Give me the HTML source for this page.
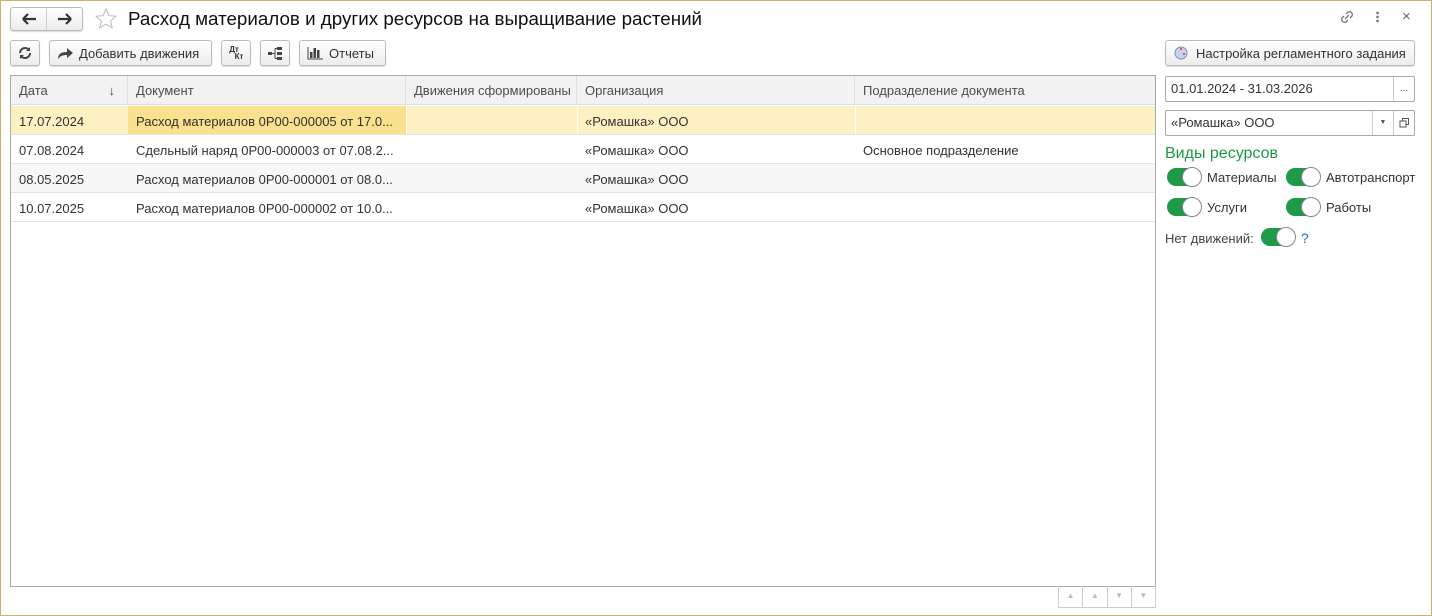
<!DOCTYPE html>
<html><head><meta charset="utf-8"><style>
*{box-sizing:border-box;margin:0;padding:0}
body{width:1432px;height:616px;overflow:hidden;background:#fff;font-family:"Liberation Sans",sans-serif;font-size:13px;color:#333;position:relative}
.frame{position:absolute;left:0;top:0;width:1432px;height:616px;border:1px solid #c9b56a}
.abs{position:absolute}
.btn{position:absolute;height:26px;border:1px solid #bbb;border-radius:3px;background:linear-gradient(#fff,#ececec);box-shadow:0 1px 1px rgba(0,0,0,.15);display:flex;align-items:center;font-size:13px;color:#333}
.tbl{position:absolute;left:10px;top:75px;width:1146px;height:512px;border:1px solid #aaa;background:#fff}
.hdr{position:absolute;top:0;height:29px;background:#f2f2f2;border-bottom:1px solid #ddd;border-right:1px solid #ddd;line-height:29px;padding-left:8px;color:#4d4d4d}
.row{position:absolute;left:0;width:1144px;height:29px;border-bottom:1px solid #e4e4e4;line-height:31px}
.row span{position:absolute;top:0}
.tog{position:absolute;width:34px;height:20px}
.tog .t{position:absolute;left:0;top:1px;width:34px;height:18px;border-radius:9px;background:#1e9a48}
.tog .k{position:absolute;right:-1px;top:0;width:20px;height:20px;border-radius:50%;background:#fff;border:1px solid #888}
.inp{position:absolute;border:1px solid #aaa;border-radius:2px;height:26px;background:#fff;line-height:24px;padding-left:5px;font-size:13px;color:#333}
</style></head><body>
<div class="frame"></div>
<div class="btn" style="left:10px;top:7px;width:73px;height:24px;padding:0">
<svg width="36" height="22" style="border-right:1px solid #ccc"><path d="M12 11h13M12 11l5-5M12 11l5 5" stroke="#333" stroke-width="2.2" fill="none"/></svg>
<svg width="36" height="22"><path d="M24 11H11M24 11l-5-5M24 11l-5 5" stroke="#333" stroke-width="2.2" fill="none"/></svg>
</div>
<svg class="abs" style="left:94px;top:7px" width="24" height="24"><path d="M12 2l2.9 6.6 7.1.6-5.4 4.7 1.6 7-6.2-3.7-6.2 3.7 1.6-7L2 9.2l7.1-.6z" fill="none" stroke="#bbb" stroke-width="1"/></svg>
<div class="abs" style="left:128px;top:8px;font-size:18.8px;color:#111;line-height:22px">Расход материалов и других ресурсов на выращивание растений</div>
<svg class="abs" style="left:1338px;top:8px" width="18" height="18"><path d="M8 6l2-2a3 3 0 014 4l-2 2M10 12l-2 2a3 3 0 01-4-4l2-2M7 11l4-4" stroke="#777" stroke-width="1.3" fill="none"/></svg>
<div class="abs" style="left:1376px;top:11px;width:3px;height:12px;background:radial-gradient(circle,#777 1.2px,transparent 1.5px) 0 0/3px 4px"></div>
<div class="abs" style="left:1402px;top:8px;font-size:15px;color:#666">×</div>
<div class="btn" style="left:10px;top:40px;width:30px;justify-content:center"><svg width="16" height="16"><path d="M3 8a5 5 0 019-3M13 8a5 5 0 01-9 3" stroke="#444" stroke-width="2" fill="none"/><path d="M13 2v4H9zM3 14v-4h4z" fill="#444"/></svg></div>
<div class="btn" style="left:49px;top:40px;width:163px;padding-left:7px"><svg width="18" height="14"><path d="M1 13c0-5 3-7 9-7V2l6 5-6 5V9c-4 0-7 1-9 4z" fill="#444"/></svg><span style="margin-left:4px">Добавить движения</span></div>
<div class="btn" style="left:221px;top:40px;width:30px;justify-content:center;font-size:8px;font-weight:bold;line-height:7px;flex-direction:column"><span style="margin-left:-4px">Дт</span><span style="margin-left:6px">Кт</span></div>
<div class="btn" style="left:260px;top:40px;width:30px;justify-content:center"><svg width="16" height="14"><rect x="1" y="6" width="4" height="3" fill="#444"/><rect x="10" y="1" width="5" height="3" fill="#444"/><rect x="10" y="6" width="5" height="3" fill="#444"/><rect x="10" y="11" width="5" height="3" fill="#444"/><path d="M5 7.5h3M8 2.5v10M8 2.5h2M8 12.5h2" stroke="#444"/></svg></div>
<div class="btn" style="left:299px;top:40px;width:87px;padding-left:7px"><svg width="16" height="14"><path d="M1 1v12h15" stroke="#444" fill="none"/><rect x="3" y="6" width="2.5" height="6" fill="#444"/><rect x="6.5" y="2" width="2.5" height="10" fill="#444"/><rect x="10" y="4" width="2.5" height="8" fill="#444"/></svg><span style="margin-left:6px">Отчеты</span></div>
<div class="btn" style="left:1165px;top:40px;width:250px;padding-left:8px"><svg width="14" height="14"><circle cx="7" cy="7" r="6" fill="#c9d2e8" stroke="#8090b0"/><circle cx="7" cy="3" r="1" fill="#d33"/><circle cx="10" cy="8" r="1" fill="#d33"/></svg><span style="margin-left:8px">Настройка регламентного задания</span></div>
<div class="tbl">
<div class="hdr" style="left:0;width:117px">Дата<span style="position:absolute;right:12px">↓</span></div>
<div class="hdr" style="left:117px;width:278px">Документ</div>
<div class="hdr" style="left:395px;width:171px">Движения сформированы</div>
<div class="hdr" style="left:566px;width:278px">Организация</div>
<div class="hdr" style="left:844px;width:300px;border-right:0">Подразделение документа</div>
<div class="row" style="top:30px;background:#fdf1c3"><div style="position:absolute;left:117px;top:0;width:278px;height:28px;background:#fbe18e"></div><span style="left:8px">17.07.2024</span><span style="left:125px">Расход материалов 0Р00-000005 от 17.0...</span><span style="left:574px">«Ромашка» ООО</span><div style="position:absolute;left:395px;top:0;width:1px;height:28px;background:#fff"></div><div style="position:absolute;left:566px;top:0;width:1px;height:28px;background:#fff"></div><div style="position:absolute;left:844px;top:0;width:1px;height:28px;background:#fff"></div></div>
<div class="row" style="top:59px"><span style="left:8px">07.08.2024</span><span style="left:125px">Сдельный наряд 0Р00-000003 от 07.08.2...</span><span style="left:574px">«Ромашка» ООО</span><span style="left:852px">Основное подразделение</span></div>
<div class="row" style="top:88px;background:#f7f7f7"><span style="left:8px">08.05.2025</span><span style="left:125px">Расход материалов 0Р00-000001 от 08.0...</span><span style="left:574px">«Ромашка» ООО</span></div>
<div class="row" style="top:117px"><span style="left:8px">10.07.2025</span><span style="left:125px">Расход материалов 0Р00-000002 от 10.0...</span><span style="left:574px">«Ромашка» ООО</span></div>
</div>
<div class="abs" style="left:1058px;top:586px;width:98px;height:22px;border:1px solid #ccc;border-top:none;display:flex">
<div style="flex:1;border-right:1px solid #ccc;text-align:center;color:#bbb;font-size:8px;line-height:20px">▲</div><div style="flex:1;border-right:1px solid #ccc;text-align:center;color:#bbb;font-size:8px;line-height:20px">▲</div><div style="flex:1;border-right:1px solid #ccc;text-align:center;color:#bbb;font-size:8px;line-height:20px">▼</div><div style="flex:1;text-align:center;color:#bbb;font-size:8px;line-height:20px">▼</div></div>
<div class="inp" style="left:1165px;top:76px;width:250px">01.01.2024 - 31.03.2026<div style="position:absolute;right:0;top:0;width:21px;height:24px;border-left:1px solid #ccc;text-align:center;font-size:10px;color:#555">...</div></div>
<div class="inp" style="left:1165px;top:110px;width:250px">«Ромашка» ООО<div style="position:absolute;right:21px;top:0;width:21px;height:24px;border-left:1px solid #ccc;text-align:center;font-size:7px;color:#555">▼</div><div style="position:absolute;right:0;top:0;width:21px;height:24px;border-left:1px solid #ccc"><svg width="20" height="24"><rect x="6" y="10" width="6" height="6" fill="none" stroke="#555"/><path d="M8.5 10V7.5h6v6H12" fill="none" stroke="#555"/></svg></div></div>
<div class="abs" style="left:1165px;top:143px;font-size:16px;color:#1a9a44;line-height:22px">Виды ресурсов</div>
<div class="tog" style="left:1167px;top:167px"><div class="t"></div><div class="k"></div></div><div class="abs" style="left:1207px;top:170px">Материалы</div>
<div class="tog" style="left:1286px;top:167px"><div class="t"></div><div class="k"></div></div><div class="abs" style="left:1326px;top:170px">Автотранспорт</div>
<div class="tog" style="left:1167px;top:197px"><div class="t"></div><div class="k"></div></div><div class="abs" style="left:1207px;top:200px">Услуги</div>
<div class="tog" style="left:1286px;top:197px"><div class="t"></div><div class="k"></div></div><div class="abs" style="left:1326px;top:200px">Работы</div>
<div class="abs" style="left:1165px;top:231px;color:#444">Нет движений:</div>
<div class="tog" style="left:1261px;top:227px"><div class="t"></div><div class="k"></div></div>
<div class="abs" style="left:1301px;top:230px;color:#1a70c0;font-size:14px">?</div>
</body></html>
